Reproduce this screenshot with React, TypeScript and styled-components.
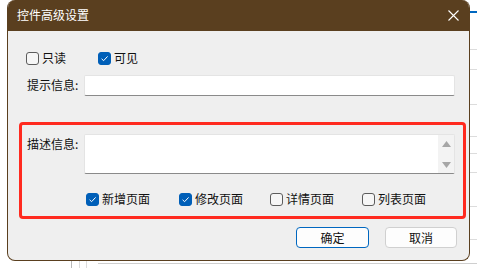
import React from "react";
import styled, { createGlobalStyle } from "styled-components";

const Global = createGlobalStyle`
  html, body { margin: 0; padding: 0; background: #ffffff; }
  body { font-family: "Noto Sans CJK SC", "Noto Sans", sans-serif; font-size: 12px; color: #111111; }
  * { box-sizing: border-box; }
`;

const line = (c: string, x: number, y: number, w: number, h: number) =>
  `linear-gradient(${c}, ${c}) ${x}px ${y}px / ${w}px ${h}px no-repeat`;

const Backdrop = styled.div`
  position: relative;
  width: 477px;
  height: 268px;
  overflow: hidden;
  background: ${[
    line("#0067c0", 470, 11, 7, 2),
    line("#dcdcdc", 470, 49, 7, 1),
    line("#dcdcdc", 470, 69, 7, 1),
    line("#dcdcdc", 470, 104, 7, 1),
    line("#dcdcdc", 470, 136, 7, 1),
    line("#dcdcdc", 470, 153, 7, 1),
    line("#dcdcdc", 470, 172, 7, 1),
    line("#dcdcdc", 470, 206, 7, 1),
    line("#dcdcdc", 470, 239, 7, 1),
    line("#b8b8b8", 71, 261, 1, 7),
    line("#dcdcdc", 79, 261, 1, 7),
    line("#dcdcdc", 86, 261, 1, 7),
    line("#cfcfcf", 98, 263, 379, 1),
  ].join(", ")}, #ffffff;
`;

const Dialog = styled.div`
  position: absolute;
  left: 7px;
  top: 0;
  width: 463px;
  height: 261px;
  display: flex;
  flex-direction: column;
  background: #efefef;
  border: 1px solid #5a3f1f;
  border-top: none;
  border-radius: 8px;
  overflow: hidden;
`;

const TitleBar = styled.div`
  height: 31px;
  flex: none;
  display: flex;
  align-items: center;
  justify-content: space-between;
  padding: 0 10px 0 9px;
  background: #5a3f1f;
  color: #ffffff;
  font-size: 12px;
`;

const Title = styled.span`
  line-height: 16px;
  margin-top: -1px;
`;

const CloseIcon = styled.svg`
  width: 11px;
  height: 11px;
  margin-top: -1px;
`;

const Body = styled.div`
  flex: 1;
  display: flex;
  flex-direction: column;
  padding: 19px 4px 0 11px;
`;

const CheckRow = styled.div<{ $indent: number; $top?: number }>`
  display: flex;
  align-items: center;
  height: 16px;
  margin-top: ${(p) => p.$top ?? 0}px;
  padding-left: ${(p) => p.$indent}px;
`;

const CheckItem = styled.label<{ $w: number }>`
  display: flex;
  align-items: center;
  gap: 3px;
  width: ${(p) => p.$w}px;
  line-height: 16px;
  white-space: nowrap;
`;

const Box = styled.span<{ $checked: boolean }>`
  width: 13px;
  height: 13px;
  flex: none;
  border-radius: 3px;
  display: flex;
  align-items: center;
  justify-content: center;
  background: ${(p) => (p.$checked ? "#005fb8" : "#f6f6f6")};
  border: 1px solid ${(p) => (p.$checked ? "#005fb8" : "#5c5c5c")};
`;

const FieldRow = styled.div<{ $top: number }>`
  display: flex;
  align-items: flex-start;
  margin-top: ${(p) => p.$top}px;
`;

const Label = styled.span<{ $w: number; $pad: number }>`
  width: ${(p) => p.$w}px;
  padding-left: ${(p) => p.$pad}px;
  padding-top: 2px;
  line-height: 16px;
  flex: none;
  white-space: nowrap;
`;

const Input = styled.div`
  width: 371px;
  height: 21px;
  background: #ffffff;
  border: 1px solid #e4e4e4;
  border-bottom: 1px solid #8a8a8a;
  border-radius: 2px;
`;

const TextArea = styled.div`
  width: 371px;
  height: 40px;
  background: #ffffff;
  border: 1px solid #e4e4e4;
  border-bottom: 1px solid #8a8a8a;
  border-radius: 2px;
  display: flex;
  justify-content: flex-end;
`;

const Scroll = styled.div`
  width: 16px;
  height: 100%;
  background: #f3f3f3;
  display: flex;
  flex-direction: column;
  justify-content: space-between;
  align-items: center;
  padding: 6px 0 5px;
`;

const RedBox = styled.div`
  margin-top: 26px;
  width: 447px;
  height: 97px;
  border: 3px solid #ff2a1f;
  border-radius: 4px;
  display: flex;
  flex-direction: column;
  padding-top: 9px;
`;

const Buttons = styled.div`
  display: flex;
  justify-content: flex-end;
  gap: 16px;
  margin-top: 8px;
  padding-right: 8px;
`;

const Button = styled.button<{ $primary?: boolean; $w: number }>`
  width: ${(p) => p.$w}px;
  height: 21px;
  padding: 0;
  font-family: inherit;
  font-size: 12px;
  color: #111111;
  background: #fdfdfd;
  border: 1px solid ${(p) => (p.$primary ? "#0067c0" : "#d0d0d0")};
  border-radius: 4px;
  line-height: 18px;
`;

const Check = () => (
  <svg width="9" height="9" viewBox="0 0 9 9">
    <path d="M1.6 4.8 L3.6 6.7 L7.6 2.4" fill="none" stroke="#ffffff" strokeWidth="1" />
  </svg>
);

const CB = ({ label, checked, w }: { label: string; checked: boolean; w: number }) => (
  <CheckItem $w={w}>
    <Box $checked={checked}>{checked && <Check />}</Box>
    {label}
  </CheckItem>
);

export default function App() {
  return (
    <Backdrop>
      <Global />
      <Dialog>
        <TitleBar>
          <Title>控件高级设置</Title>
          <CloseIcon viewBox="0 0 11 11">
            <path d="M0.5 0.5 L10.5 10.5 M10.5 0.5 L0.5 10.5" stroke="#ffffff" strokeWidth="1.1" />
          </CloseIcon>
        </TitleBar>
        <Body>
          <CheckRow $indent={7}>
            <CB label="只读" checked={false} w={72} />
            <CB label="可见" checked={true} w={60} />
          </CheckRow>
          <FieldRow $top={9}>
            <Label $w={65} $pad={8}>提示信息:</Label>
            <Input />
          </FieldRow>
          <RedBox>
            <FieldRow $top={0}>
              <Label $w={62} $pad={5}>描述信息:</Label>
              <TextArea>
                <Scroll>
                  <svg width="9" height="6" viewBox="0 0 9 6">
                    <path d="M4.5 0 L9 6 L0 6 Z" fill="#a6a6a6" />
                  </svg>
                  <svg width="9" height="6" viewBox="0 0 9 6">
                    <path d="M0 0 L9 0 L4.5 6 Z" fill="#a6a6a6" />
                  </svg>
                </Scroll>
              </TextArea>
            </FieldRow>
            <CheckRow $indent={64} $top={17}>
              <CB label="新增页面" checked={true} w={93} />
              <CB label="修改页面" checked={true} w={91} />
              <CB label="详情页面" checked={false} w={92} />
              <CB label="列表页面" checked={false} w={80} />
            </CheckRow>
          </RedBox>
          <Buttons>
            <Button $primary $w={73}>确定</Button>
            <Button $w={72}>取消</Button>
          </Buttons>
        </Body>
      </Dialog>
    </Backdrop>
  );
}
